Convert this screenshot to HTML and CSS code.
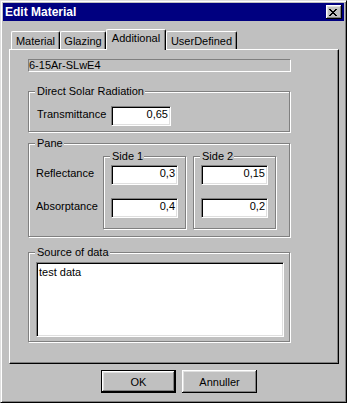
FILE: index.html
```html
<!DOCTYPE html>
<html lang="en">
<head>
    <meta charset="UTF-8">
    <title>Edit Material</title>
    <link rel="stylesheet" href="styles.css">
</head>
<body>
    <div class="window">
        <div class="titlebar">
            <span class="title">Edit Material</span>
            <button class="close-btn">
                <svg width="8" height="7" viewBox="0 0 8 7"><path fill="#000" d="M0 0h2v1h-2z M6 0h2v1h-2z M1 1h2v1h-2z M5 1h2v1h-2z M2 2h4v1h-4z M3 3h2v1h-2z M2 4h4v1h-4z M1 5h2v1h-2z M5 5h2v1h-2z M0 6h2v1h-2z M6 6h2v1h-2z"/></svg>
            </button>
        </div>
        <div class="tabs">
            <div class="tab tab-material">Material</div>
            <div class="tab tab-glazing">Glazing</div>
            <div class="tab tab-additional active">Additional</div>
            <div class="tab tab-userdefined">UserDefined</div>
        </div>
        <div class="tab-panel">
            <div class="name-field">6-15Ar-SLwE4</div>

            <div class="group group-solar">
                <div class="group-title">Direct Solar Radiation</div>
                <div class="field-row">
                    <span class="field-label">Transmittance</span>
                    <div class="edit edit-wide">0,65</div>
                </div>
            </div>

            <div class="group group-pane">
                <div class="group-title">Pane</div>
                <div class="pane-row">
                    <div class="pane-labels">
                        <div class="field-label">Reflectance</div>
                        <div class="field-label">Absorptance</div>
                    </div>
                    <div class="group side">
                        <div class="group-title">Side 1</div>
                        <div class="edit side-edit">0,3</div>
                        <div class="edit side-edit">0,4</div>
                    </div>
                    <div class="group side">
                        <div class="group-title">Side 2</div>
                        <div class="edit side-edit">0,15</div>
                        <div class="edit side-edit">0,2</div>
                    </div>
                </div>
            </div>

            <div class="group group-source">
                <div class="group-title">Source of data</div>
                <div class="memo">test data</div>
            </div>
        </div>
        <div class="buttons">
            <button class="btn btn-default">OK</button>
            <button class="btn">Annuller</button>
        </div>
    </div>
</body>
</html>
```

FILE: styles.css
```css
* { box-sizing: border-box; }
body {
    margin: 0;
    font-family: "Liberation Sans", Arial, sans-serif;
    font-size: 11px;
    color: #000;
    background: #c0c0c0;
}
.window {
    width: 347px;
    height: 403px;
    padding: 2px;
    background: #c0c0c0;
    border: 1px solid;
    border-color: #dfdfdf #000 #000 #dfdfdf;
    box-shadow: inset 1px 1px #fff, inset -1px -1px #808080;
}
.titlebar {
    height: 18px;
    display: flex;
    align-items: center;
    justify-content: space-between;
    padding: 0 2px;
    background: #000080;
    color: #fff;
}
.title {
    font-weight: bold;
    font-size: 12px;
}
.close-btn {
    width: 16px;
    height: 14px;
    padding: 4px 0 0 3px;
    border: none;
    background: #c0c0c0;
    display: flex;
    align-items: flex-start;
    box-shadow: inset -1px -1px #000, inset 1px 1px #fff, inset -2px -2px #808080, inset 2px 2px #dfdfdf;
}
.close-btn svg { display: block; }

/* tabs */
.tabs {
    display: flex;
    align-items: flex-end;
    height: 20px;
    margin: 8px 0 0 8px;
}
.tab {
    height: 18px;
    padding-top: 3px;
    line-height: 13px;
    text-align: center;
    white-space: nowrap;
    border-top: 1px solid #fff;
    border-left: 1px solid #fff;
    border-right: 1px solid #000;
    border-radius: 2px 2px 0 0;
    box-shadow: inset -1px 0 #808080;
}
.tab.active {
    height: 21px;
    padding-top: 2px;
    margin-bottom: -1px;
    position: relative;
    z-index: 1;
    background: #c0c0c0;
}
.tab-material { width: 49px; }
.tab-glazing { width: 46px; }
.tab-additional { width: 60px; }
.tab-userdefined { width: 71px; }

.tab-panel {
    width: 330px;
    height: 315px;
    margin-left: 6px;
    padding: 9px 0 0 18px;
    border-top: 1px solid #fff;
    border-left: 1px solid #fff;
    border-right: 1px solid #000;
    border-bottom: 1px solid #000;
    box-shadow: inset -1px -1px #808080;
}
.name-field {
    width: 263px;
    height: 13px;
    line-height: 11px;
    white-space: nowrap;
    border: 1px solid;
    border-color: #808080 #fff #fff #808080;
}

/* group boxes */
.group {
    width: 262px;
    border: 1px solid #808080;
    box-shadow: 1px 1px #fff, inset 1px 1px #fff;
}
.group-title {
    width: fit-content;
    margin: -7px 0 0 6px;
    padding: 0 1px 0 2px;
    line-height: 13px;
    background: #c0c0c0;
    white-space: nowrap;
}
.group-solar { margin-top: 19px; height: 41px; }
.group-pane { margin-top: 11px; height: 94px; }
.group-source { margin-top: 15px; height: 90px; }

.field-row {
    display: flex;
    margin-top: 8px;
    padding-left: 8px;
}
.field-label {
    line-height: 13px;
    margin-top: 2px;
}
.field-row .field-label { width: 74px; }

.edit {
    height: 20px;
    padding: 1px 2px 0 0;
    line-height: 13px;
    text-align: right;
    background: #fff;
    border: 1px solid;
    border-color: #808080 #fff #fff #808080;
    box-shadow: inset 1px 1px #000, inset -1px -1px #dfdfdf;
}
.edit-wide { width: 60px; }

.pane-row {
    display: flex;
    margin-top: 6px;
}
.pane-labels {
    width: 74px;
    padding: 9px 0 0 7px;
}
.pane-labels .field-label + .field-label { margin-top: 20px; }
.side {
    width: 83px;
    height: 73px;
    padding: 0 7px;
}
.side .group-title { margin-left: -1px; }
.side + .side { margin-left: 7px; }
.side-edit { width: 67px; margin-top: 2px; }
.side-edit + .side-edit { margin-top: 13px; }

.memo {
    width: 248px;
    height: 75px;
    margin: 3px 0 0 7px;
    padding: 3px 2px 0;
    line-height: 13px;
    background: #fff;
    border: 1px solid;
    border-color: #808080 #fff #fff #808080;
    box-shadow: inset 1px 1px #000, inset -1px -1px #dfdfdf;
}

/* dialog buttons */
.buttons {
    display: flex;
    gap: 6px;
    margin: 6px 0 0 98px;
}
.btn {
    width: 75px;
    height: 23px;
    padding: 0;
    font: inherit;
    color: #000;
    border: none;
    background: #c0c0c0;
    box-shadow: inset -1px -1px #000, inset 1px 1px #fff, inset -2px -2px #808080, inset 2px 2px #dfdfdf;
}
.btn-default { border: 1px solid #000; }
```
